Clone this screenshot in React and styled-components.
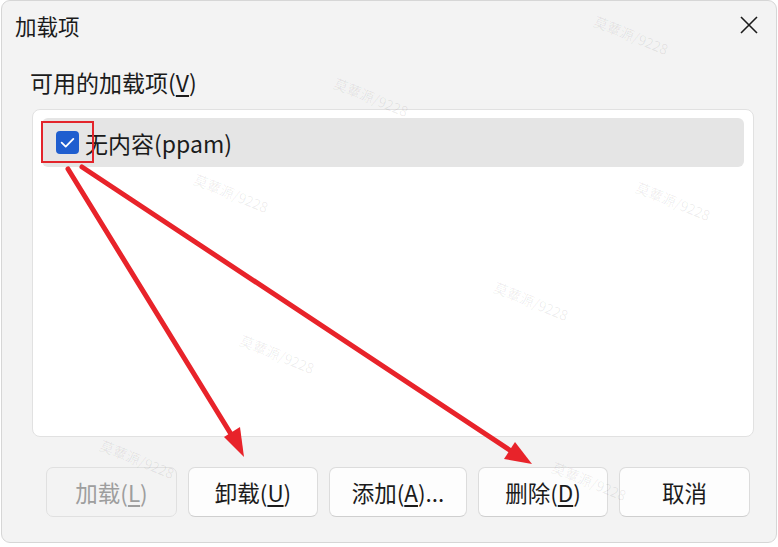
import React from 'react'
import styled, { createGlobalStyle } from 'styled-components'

const Global = createGlobalStyle`
    html, body {
        margin: 0;
        padding: 0;
        background: #ffffff;
    }
    body {
        font-family: "Noto Sans CJK SC", "Noto Sans", sans-serif;
    }
`;

const Dialog = styled.div`
    position: relative;
    box-sizing: border-box;
    width: 776px;
    height: 543px;
    margin-left: 1px;
    background: #f3f3f3;
    border: 1px solid #d6d6d6;
    border-radius: 9px;
    display: flex;
    flex-direction: column;
    overflow: hidden;
`;

const TitleBar = styled.div`
    display: flex;
    align-items: center;
    justify-content: space-between;
    height: 48px;
    padding: 0 16px 2px 13px;
`;

const Title = styled.div`
    font-size: 21.5px;
    color: #1b1b1b;
`;

const CloseBtn = styled.div`
    width: 22px;
    height: 22px;
    display: flex;
    align-items: center;
    justify-content: center;
`;

const Body = styled.div`
    flex: 1;
    display: flex;
    flex-direction: column;
    padding: 16px 24px 0 28px;
`;

const Label = styled.div`
    font-size: 23px;
    color: #1b1b1b;
    line-height: 30px;
    margin-bottom: 12px;
    u { text-underline-offset: 3px; }
`;

const ListBox = styled.div`
    box-sizing: border-box;
    height: 328px;
    width: 722px;
    margin-left: 2px;
    background: #ffffff;
    border: 1px solid #e1e1e1;
    border-radius: 8px;
    padding: 8px 9px;
`;

const Row = styled.div`
    height: 49px;
    background: #e5e5e5;
    border-radius: 6px;
    display: flex;
    align-items: center;
    padding-left: 14px;
    gap: 6px;
    font-size: 23px;
    color: #1b1b1b;
`;

const Check = styled.div`
    width: 23px;
    height: 23px;
    border-radius: 4px;
    background: #1f5ecf;
    display: flex;
    align-items: center;
    justify-content: center;
`;

const ButtonRow = styled.div`
    display: flex;
    gap: 11px;
    margin-top: 30px;
    padding-left: 16px;
`;

const Button = styled.div`
    box-sizing: border-box;
    width: ${p => p.$w || 130}px;
    height: 50px;
    border-radius: 7px;
    border: 1px solid ${p => p.$disabled ? '#e0e0e0' : '#dcdcdc'};
    border-bottom-color: ${p => p.$disabled ? '#e0e0e0' : '#cfcfcf'};
    background: ${p => p.$disabled ? '#f3f3f3' : '#fdfdfd'};
    color: ${p => p.$disabled ? '#9e9e9e' : '#1b1b1b'};
    font-size: 22.5px;
    display: flex;
    align-items: center;
    justify-content: center;
    u { text-underline-offset: 3px; }
`;

const Overlay = styled.svg`
    position: absolute;
    left: 0;
    top: 0;
    pointer-events: none;
`;

const Watermark = styled.div`
    position: absolute;
    left: ${p => p.$x}px;
    top: ${p => p.$y}px;
    transform: rotate(22deg);
    font-size: 14px;
    color: rgba(0, 0, 0, 0.07);
    white-space: nowrap;
    font-family: "Noto Sans CJK SC", sans-serif;
`;

const marks = [
    [590, 24], [330, 86], [190, 182], [632, 190], [490, 290],
    [236, 343], [96, 448], [548, 470],
];

const App = () => {
    return (
        <>
            <Global />
            <Dialog>
                <TitleBar>
                    <Title>加载项</Title>
                    <CloseBtn>
                        <svg width="20" height="20" viewBox="0 0 20 20">
                            <path d="M2 2 L18 18 M18 2 L2 18" stroke="#1b1b1b" strokeWidth="1.6" />
                        </svg>
                    </CloseBtn>
                </TitleBar>
                <Body>
                    <Label>可用的加载项(<u>V</u>)</Label>
                    <ListBox>
                        <Row>
                            <Check>
                                <svg width="17" height="17" viewBox="0 0 16 16">
                                    <path d="M2.5 8.2 L6.3 11.8 L13.5 4.6" fill="none" stroke="#ffffff" strokeWidth="1.7" strokeLinecap="round" strokeLinejoin="round" />
                                </svg>
                            </Check>
                            无内容(ppam)
                        </Row>
                    </ListBox>
                    <ButtonRow>
                        <Button $disabled $w={131}>加载(<u>L</u>)</Button>
                        <Button>卸载(<u>U</u>)</Button>
                        <Button $w={138}>添加(<u>A</u>)...</Button>
                        <Button>删除(<u>D</u>)</Button>
                        <Button $w={131}>取消</Button>
                    </ButtonRow>
                </Body>
                {marks.map(([x, y], i) => (
                    <Watermark key={i} $x={x} $y={y}>莫蕈源/9228</Watermark>
                ))}
                <Overlay width="776" height="543" viewBox="0 0 776 543">
                    <rect x="40" y="121" width="51" height="40" fill="none" stroke="#e3242b" strokeWidth="2" />
                    <path d="M66 168 L232 438" stroke="#e8232a" strokeWidth="5" strokeLinecap="round" />
                    <path d="M242 456 L222 436 L238 426 Z" fill="#e8232a" />
                    <path d="M80 166 L512 452" stroke="#e8232a" strokeWidth="5" strokeLinecap="round" />
                    <path d="M530 463 L502 458 L513 441 Z" fill="#e8232a" />
                </Overlay>
            </Dialog>
        </>
    )
}

export default App
